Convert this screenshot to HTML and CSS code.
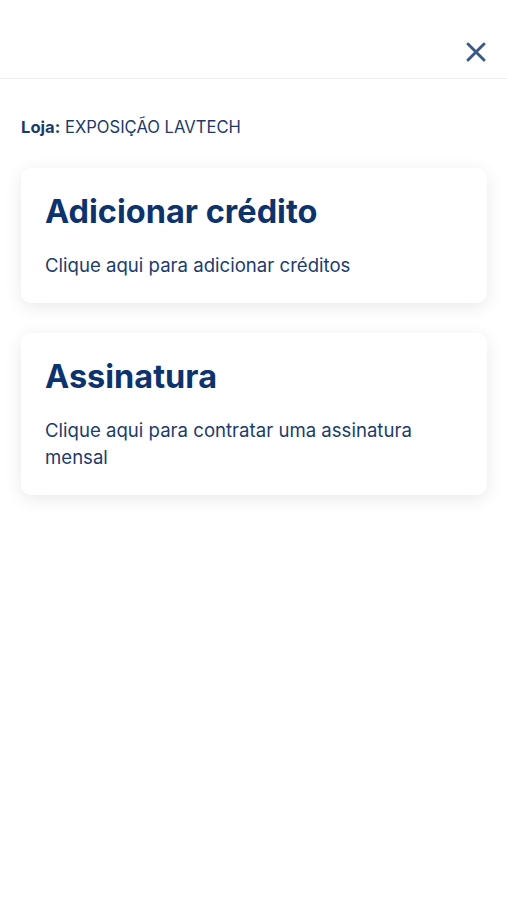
FILE: index.html
```html
<!DOCTYPE html>
<html lang="pt-BR">
<head>
    <meta charset="UTF-8">
    <meta name="viewport" content="width=device-width, initial-scale=1.0">
    <title>Loja</title>
    <link rel="stylesheet" href="styles.css">
</head>
<body>
    <header class="top-bar">
        <button class="close-button" aria-label="Fechar">
            <svg width="22" height="22" viewBox="0 0 22 22">
                <path d="M3 3 L19 19 M19 3 L3 19" stroke="currentColor" stroke-width="3" stroke-linecap="round"/>
            </svg>
        </button>
    </header>
    <main class="container">
        <p class="store"><strong>Loja:</strong> EXPOSIÇÃO LAVTECH</p>
        <div class="card">
            <h2>Adicionar crédito</h2>
            <p>Clique aqui para adicionar créditos</p>
        </div>
        <div class="card">
            <h2>Assinatura</h2>
            <p>Clique aqui para contratar uma assinatura mensal</p>
        </div>
    </main>
</body>
</html>
```

FILE: styles.css
```css
body {
    font-family: Inter, "Liberation Sans", sans-serif;
    background-color: #ffffff;
    color: #0f3269;
    margin: 0;
    padding: 0;
}
.top-bar {
    height: 79px;
    border-bottom: 1px solid #eeeeee;
    display: flex;
    justify-content: flex-end;
    align-items: center;
    padding: 0 20px;
    box-sizing: border-box;
}
.close-button {
    background: none;
    border: none;
    padding: 0;
    margin-top: 26px;
    color: #3b5b86;
    cursor: pointer;
    display: flex;
}
.container {
    padding: 0 20px 0 21px;
}
.store {
    margin: 38px 0 31px;
    font-size: 16.6px;
    color: #1c3a68;
}
.store strong {
    font-weight: 700;
}
.card {
    background: #ffffff;
    border-radius: 10px;
    box-shadow: 0 4px 18px rgba(0, 0, 0, 0.09);
    padding: 24px;
    margin: 0 0 30px;
}
.card h2 {
    margin: 0 0 20px;
    font-size: 32.5px;
    font-weight: 700;
    color: #0d336d;
    line-height: 40px;
}
.card p {
    margin: 0;
    font-size: 18.6px;
    line-height: 27px;
    color: #1d3c6c;
}
```
